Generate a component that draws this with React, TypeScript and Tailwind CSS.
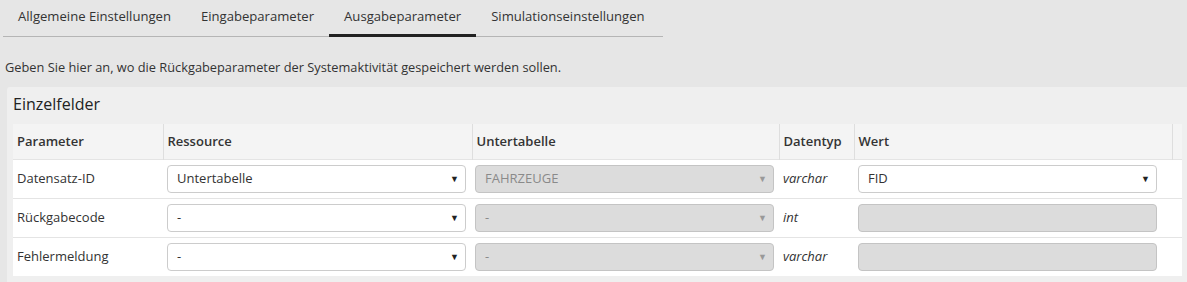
import React from "react";

const tabs = ["Allgemeine Einstellungen", "Eingabeparameter", "Ausgabeparameter", "Simulationseinstellungen"];

type Row = {
  name: string;
  resource: string;
  sub: string;
  type: string;
  value?: string;
};

const rows: Row[] = [
  { name: "Datensatz-ID", resource: "Untertabelle", sub: "FAHRZEUGE", type: "varchar", value: "FID" },
  { name: "Rückgabecode", resource: "-", sub: "-", type: "int" },
  { name: "Fehlermeldung", resource: "-", sub: "-", type: "varchar" },
];

function Select({ label, disabled }: { label: string; disabled?: boolean }) {
  return (
    <div
      className={
        "flex h-[28px] w-[299px] items-center justify-between rounded-[4px] border pl-[9px] pr-[6px] text-[13px] " +
        (disabled ? "border-[#c4c4c4] bg-[#dcdcdc] text-[#8a8a8a]" : "border-[#cccccc] bg-white text-[#333]")
      }
    >
      <span>{label}</span>
      <span className={"text-[9px] " + (disabled ? "text-[#999]" : "text-[#222]")}>▼</span>
    </div>
  );
}

function Input() {
  return <div className="h-[28px] w-[299px] rounded-[4px] border border-[#c4c4c4] bg-[#dcdcdc]" />;
}

export default function App() {
  return (
    <div className="h-[282px] w-[1187px] overflow-hidden bg-[#e6e6e6] font-['Open_Sans',sans-serif] text-[#333]">
      {/* Tabs */}
      <div className="ml-[3px] flex w-[660px] border-b border-[#b5b5b5]">
        {tabs.map((t) => (
          <div
            key={t}
            className={
              "-mb-[1px] shrink-0 whitespace-nowrap px-[15px] pt-[7px] pb-[9px] text-[13.1px] leading-[18px] " +
              (t === "Ausgabeparameter" ? "border-b-[3px] border-[#222]" : "border-b-[3px] border-transparent")
            }
          >
            {t}
          </div>
        ))}
      </div>

      <p className="mt-[22px] ml-[5px] text-[12.8px] leading-[16px]">
        Geben Sie hier an, wo die Rückgabeparameter der Systemaktivität gespeichert werden sollen.
      </p>

      {/* Panel */}
      <div className="mt-[12px] ml-[7px] rounded-tl-[3px] bg-[#efefef] pl-[6px] pb-[6px]">
        <div className="pt-[5px] pb-[8px] text-[16px] leading-[24px] text-[#222]">Einzelfelder</div>
        <table className="w-[1169px] table-fixed border-collapse text-[13px]">
          <colgroup>
            <col className="w-[150px]" />
            <col className="w-[309px]" />
            <col className="w-[307px]" />
            <col className="w-[75px]" />
            <col className="w-[318px]" />
            <col className="w-[10px]" />
          </colgroup>
          <thead>
            <tr className="h-[35px] bg-[#f4f4f4] text-left">
              <th className="pl-[4px] font-semibold">Parameter</th>
              <th className="border-l border-[#dedede] pl-[4px] font-semibold">Ressource</th>
              <th className="border-l border-[#dedede] pl-[4px] font-semibold">Untertabelle</th>
              <th className="border-l border-[#dedede] pl-[4px] font-semibold">Datentyp</th>
              <th className="border-l border-[#dedede] pl-[4px] font-semibold">Wert</th>
              <th className="border-l border-[#dedede]"></th>
            </tr>
          </thead>
          <tbody>
            {rows.map((r) => (
              <tr key={r.name} className="h-[39px] border-t border-[#e4e4e4] bg-white">
                <td className="pl-[4px]">{r.name}</td>
                <td className="pl-[4px]">
                  <Select label={r.resource} />
                </td>
                <td className="pl-[3px]">
                  <Select label={r.sub} disabled />
                </td>
                <td className="pl-[4px] italic">{r.type}</td>
                <td className="pl-[4px]">{r.value ? <Select label={r.value} /> : <Input />}</td>
                <td></td>
              </tr>
            ))}
          </tbody>
        </table>
      </div>
    </div>
  );
}
